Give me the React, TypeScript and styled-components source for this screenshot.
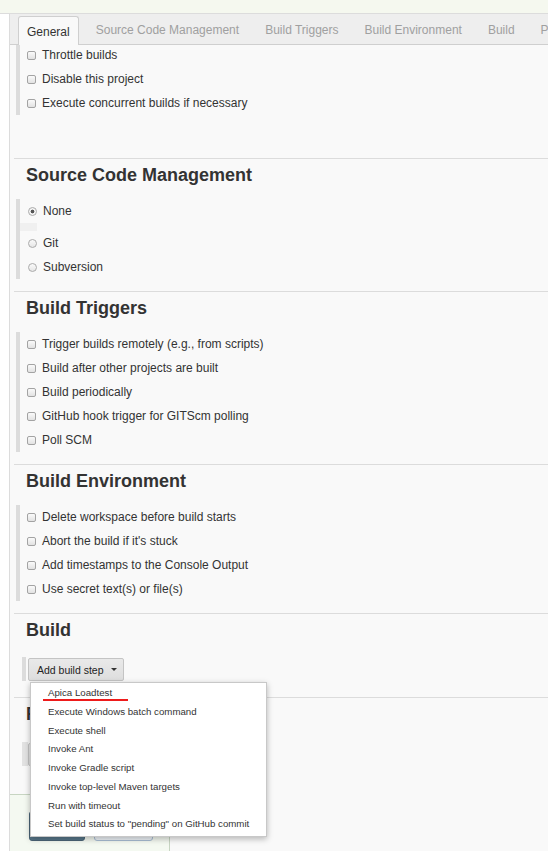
import React from "react";
import styled, { createGlobalStyle } from "styled-components";

const Global = createGlobalStyle`
  html, body { margin: 0; padding: 0; background: #fff; overflow: hidden; }
  body { font-family: "Liberation Sans", Arial, Helvetica, sans-serif; color: #333; }
  * { box-sizing: border-box; }
`;

const Page = styled.div`
  display: flex;
  flex-direction: column;
`;

const TopStrip = styled.div`
  flex: none;
  height: 14px;
  background: #f5f8ef;
  border-bottom: 1px solid #dcdcdc;
`;

const Body = styled.div`
  flex: none;
  display: flex;
`;

const Gutter = styled.div`
  flex: none;
  width: 10px;
  background: #fff;
  border-right: 1px solid #dcdcdc;
`;

const Main = styled.div`
  flex: 1;
  min-width: 0;
  background: #f9f9f9;
  display: flex;
  flex-direction: column;
  & > * { flex: none; }
`;

const TabBar = styled.div`
  position: relative;
  z-index: 1;
  display: flex;
  align-items: flex-end;
  height: 31px;
  padding-left: 4px;
  background: #eee;
  box-shadow: inset 0 -1px 0 #cfcfcf;
  overflow: hidden;
  white-space: nowrap;
`;

const Tab = styled.div<{ $active?: boolean }>`
  flex: none;
  display: flex;
  align-items: center;
  font-size: 12px;
  color: ${(p) => (p.$active ? "#333" : "#a0a0a0")};
  height: ${(p) => (p.$active ? "29px" : "31px")};
  padding: ${(p) => (p.$active ? "1px 8px 0 8px" : "1px 13px 0")};
  margin: ${(p) => (p.$active ? "0 4px" : "0")};
  background: ${(p) => (p.$active ? "#f9f9f9" : "transparent")};
  border: ${(p) => (p.$active ? "1px solid #cfcfcf" : "none")};
  border-bottom: none;
  border-radius: 3px 3px 0 0;
`;

const Section = styled.section<{ $first?: boolean; $pb: number }>`
  margin-left: 4px;
  border-top: ${(p) => (p.$first ? "none" : "1px solid #dcdcdc")};
  padding-bottom: ${(p) => p.$pb}px;
`;

const Heading = styled.h2`
  margin: 0;
  padding: 4px 0 0 12px;
  font-size: 18px;
  line-height: 24px;
  font-weight: bold;
  color: #333;
  white-space: nowrap;
`;

const Group = styled.div<{ $mt: number }>`
  display: flex;
  flex-direction: column;
  margin: ${(p) => p.$mt}px 0 0 2px;
  border-left: 4px solid #dcdcdc;
  padding-left: 7px;
`;

const Row = styled.label`
  display: flex;
  align-items: center;
  gap: 6px;
  height: 24px;
  font-size: 12px;
  color: #333;
  white-space: nowrap;
`;

const Check = styled.span`
  flex: none;
  width: 9px;
  height: 9px;
  border: 1px solid #a3a3a3;
  border-radius: 2px;
  background: linear-gradient(#fafafa, #e2e2e2);
`;

const Radio = styled.span<{ $on?: boolean }>`
  flex: none;
  width: 9px;
  height: 9px;
  margin-left: 1px;
  border: 1px solid #ababab;
  border-radius: 50%;
  background: ${(p) =>
    p.$on
      ? "radial-gradient(circle, #555 0 1.6px, #f4f4f4 2.2px)"
      : "linear-gradient(#fafafa, #e6e6e6)"};
`;

const Spacer = styled.div`
  height: 8px;
  width: 17px;
  margin-left: -7px;
  background: #f0f0f0;
`;

const StepGroup = styled.div<{ $mt: number; $bar: string; $w: number }>`
  position: relative;
  display: flex;
  align-items: flex-start;
  height: 24px;
  margin: ${(p) => p.$mt}px 0 0 8px;
  border-left: ${(p) => p.$w}px solid ${(p) => p.$bar};
  padding-left: ${(p) => 6 - p.$w}px;
`;

const StepButton = styled.button`
  display: flex;
  align-items: center;
  gap: 7px;
  height: 23px;
  margin-top: 1px;
  padding: 0 6px 0 8px;
  font-family: "Liberation Sans", Arial, sans-serif;
  font-size: 10.5px;
  color: #222;
  background: linear-gradient(#e9e9e9, #dedede);
  border: 1px solid #c4c4c4;
  border-radius: 2px;
  white-space: nowrap;
`;

const Caret = styled.span`
  width: 0;
  height: 0;
  border-left: 3px solid transparent;
  border-right: 3px solid transparent;
  border-top: 3px solid #333;
`;

const Menu = styled.ul`
  position: absolute;
  left: 4px;
  top: 25px;
  z-index: 5;
  width: 237px;
  margin: 0;
  padding: 1px 0 2px;
  list-style: none;
  background: #fff;
  border: 1px solid #c8c8c8;
  box-shadow: 0 2px 6px rgba(0, 0, 0, 0.28);
`;

const MenuItem = styled.li`
  position: relative;
  height: 18.75px;
  line-height: 18.75px;
  padding-left: 17px;
  font-size: 9.7px;
  color: #333;
  white-space: nowrap;
`;

const Underline = styled.span`
  position: absolute;
  left: 12px;
  top: 15px;
  width: 85px;
  height: 2px;
  background: #ee1b1b;
`;

const BottomBar = styled.div`
  display: flex;
  gap: 9px;
  width: 160px;
  height: 70px;
  padding: 16px 0 0 19px;
  background: #f4f9f1;
  border-top: 1px solid #c7d5c2;
  border-right: 1px solid #c7d5c2;
`;

const SaveButton = styled.button<{ $primary?: boolean }>`
  height: 30px;
  width: ${(p) => (p.$primary ? "56px" : "59px")};
  font-family: "Liberation Sans", Arial, sans-serif;
  font-size: 13px;
  color: ${(p) => (p.$primary ? "#fff" : "#333")};
  background: ${(p) => (p.$primary ? "#58778a" : "#eef3f8")};
  border: 1px solid ${(p) => (p.$primary ? "#4b6577" : "#a9bdd3")};
  border-radius: 3px;
`;

const tabs = [
  "General",
  "Source Code Management",
  "Build Triggers",
  "Build Environment",
  "Build",
  "Post-build Actions",
];

const menuItems = [
  "Apica Loadtest",
  "Execute Windows batch command",
  "Execute shell",
  "Invoke Ant",
  "Invoke Gradle script",
  "Invoke top-level Maven targets",
  "Run with timeout",
  'Set build status to "pending" on GitHub commit',
];

const CheckList = ({ items, mt }: { items: string[]; mt: number }) => (
  <Group $mt={mt}>
    {items.map((t) => (
      <Row key={t}>
        <Check />
        {t}
      </Row>
    ))}
  </Group>
);

export default function App() {
  return (
    <Page>
      <Global />
      <TopStrip />
      <Body>
        <Gutter />
        <Main>
          <TabBar>
            {tabs.map((t, i) => (
              <Tab key={t} $active={i === 0}>
                {t}
              </Tab>
            ))}
          </TabBar>

          <Section $first $pb={43}>
            <CheckList
              mt={-2}
              items={[
                "Throttle builds",
                "Disable this project",
                "Execute concurrent builds if necessary",
              ]}
            />
          </Section>

          <Section $pb={12}>
            <Heading>Source Code Management</Heading>
            <Group $mt={12}>
              <Row>
                <Radio $on />
                None
              </Row>
              <Spacer />
              <Row>
                <Radio />
                Git
              </Row>
              <Row>
                <Radio />
                Subversion
              </Row>
            </Group>
          </Section>

          <Section $pb={12}>
            <Heading>Build Triggers</Heading>
            <CheckList
              mt={12}
              items={[
                "Trigger builds remotely (e.g., from scripts)",
                "Build after other projects are built",
                "Build periodically",
                "GitHub hook trigger for GITScm polling",
                "Poll SCM",
              ]}
            />
          </Section>

          <Section $pb={12}>
            <Heading>Build Environment</Heading>
            <CheckList
              mt={12}
              items={[
                "Delete workspace before build starts",
                "Abort the build if it's stuck",
                "Add timestamps to the Console Output",
                "Use secret text(s) or file(s)",
              ]}
            />
          </Section>

          <Section $pb={16}>
            <Heading>Build</Heading>
            <StepGroup $mt={15} $bar="#dcdcdc" $w={4}>
              <StepButton>
                Add build step
                <Caret />
              </StepButton>
              <Menu>
                {menuItems.map((t, i) => (
                  <MenuItem key={t}>
                    {t}
                    {i === 0 && <Underline />}
                  </MenuItem>
                ))}
              </Menu>
            </StepGroup>
          </Section>

          <Section $pb={28}>
            <Heading>Post-build Actions</Heading>
            <StepGroup $mt={16} $bar="#e2e2e2" $w={6}>
              <StepButton>
                Add post-build action
                <Caret />
              </StepButton>
            </StepGroup>
          </Section>

          <BottomBar>
            <SaveButton $primary>Save</SaveButton>
            <SaveButton>Apply</SaveButton>
          </BottomBar>
        </Main>
      </Body>
    </Page>
  );
}
